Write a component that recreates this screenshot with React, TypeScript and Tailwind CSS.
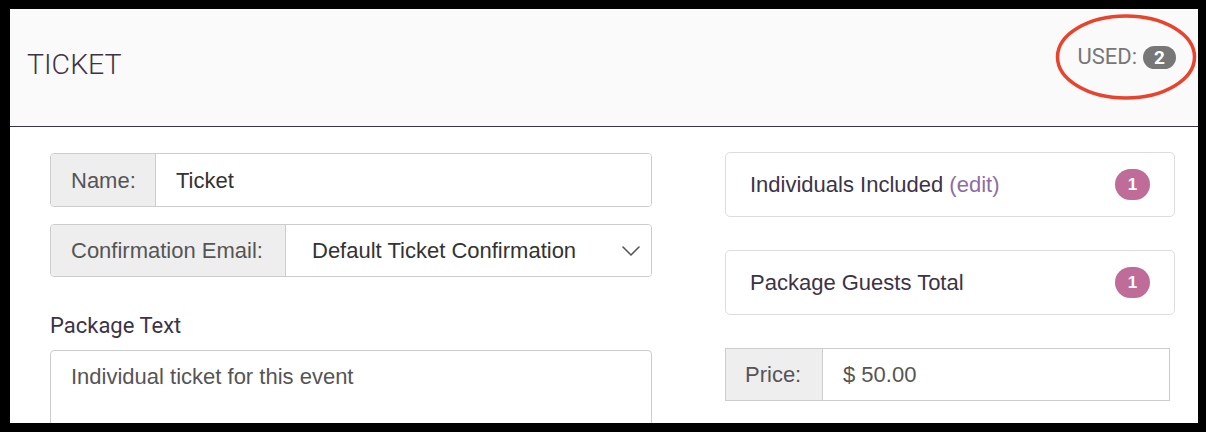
import React from "react";

const roboto = { fontFamily: "Roboto, 'Liberation Sans', sans-serif" };

function Chevron() {
  return (
    <svg width="20" height="12" viewBox="0 0 20 12" fill="none">
      <polyline points="2,2 10,10 18,2" stroke="#555" strokeWidth="1.6" strokeLinecap="round" strokeLinejoin="round" />
    </svg>
  );
}

export default function App() {
  return (
    <div className="relative w-[1206px] h-[432px] bg-black pt-[9px] pl-[10px]">
      <div className="w-[1188px] h-[414px] bg-white overflow-hidden">
        <header className="h-[118px] bg-[#fafafa] border-b border-[#3d3347] flex justify-between">
          <h1
            className="pl-[17px] pt-[38px] text-[28.5px] leading-[36px] font-light text-[#3d3347]"
            style={roboto}
          >
            TICKET
          </h1>
          <div className="flex items-center gap-[6px] pr-[22px] pt-[35px] self-start">
            <span className="text-[22px] leading-[26px] text-[#777]" style={roboto}>
              USED:
            </span>
            <span
              className="h-[23px] w-[33px] rounded-full bg-[#777] text-white text-[19px] font-bold flex items-center justify-center leading-none"
              style={roboto}
            >
              2
            </span>
          </div>
        </header>

        <div
          className="flex pl-[40px] pt-[25px] gap-[73px] text-[22px]"
          style={{ fontFamily: "'Liberation Sans', Arial, sans-serif" }}
        >
          {/* Left column */}
          <div className="w-[602px] flex flex-col">
            <div className="mt-[1px] h-[54px] flex border border-[#ccc] rounded-[4px] overflow-hidden">
              <div className="w-[105px] bg-[#eee] border-r border-[#ccc] flex items-center pl-[20px] text-[#555]">
                Name:
              </div>
              <div className="flex-1 bg-white flex items-center pl-[20px] text-[#333]">Ticket</div>
            </div>
            <div className="mt-[17px] h-[53px] flex border border-[#ccc] rounded-[4px] overflow-hidden">
              <div className="w-[235px] bg-[#eee] border-r border-[#ccc] flex items-center pl-[20px] text-[#555]">
                Confirmation Email:
              </div>
              <div className="flex-1 bg-white flex items-center justify-between pl-[26px] pr-[10px] text-[#333]">
                <span>Default Ticket Confirmation</span>
                <Chevron />
              </div>
            </div>
            <div className="mt-[36px] text-[22px] leading-[26px] text-[#3d3347]" style={roboto}>
              Package Text
            </div>
            <div className="mt-[11px] h-[120px] border border-[#ccc] rounded-[4px] pl-[20px] pt-[13px] text-[#555] leading-[26px]">
              Individual ticket for this event
            </div>
          </div>

          {/* Right column */}
          <div className="w-[450px] flex flex-col">
            <div className="h-[65px] border border-[#ddd] rounded-[5px] flex items-center justify-between pl-[24px] pr-[24px] text-[#3d3347]">
              <span>
                Individuals Included <span className="text-[#8c6ea6]">(edit)</span>
              </span>
              <span className="w-[35px] h-[31px] rounded-full bg-[#c06c98] text-white text-[17px] font-bold flex items-center justify-center leading-none">
                1
              </span>
            </div>
            <div className="mt-[33px] h-[65px] border border-[#ddd] rounded-[5px] flex items-center justify-between pl-[24px] pr-[24px] text-[#3d3347]">
              <span>Package Guests Total</span>
              <span className="w-[35px] h-[31px] rounded-full bg-[#c06c98] text-white text-[17px] font-bold flex items-center justify-center leading-none">
                1
              </span>
            </div>
            <div className="mt-[33px] w-[445px] h-[53px] flex border border-[#ccc]">
              <div className="w-[97px] bg-[#eee] border-r border-[#ccc] flex items-center pl-[19px] text-[#555]">
                Price:
              </div>
              <div className="flex-1 bg-white flex items-center pl-[20px] text-[#555]">$ 50.00</div>
            </div>
          </div>
        </div>
      </div>

      <svg
        className="absolute left-0 top-0 pointer-events-none"
        width="1206"
        height="432"
        viewBox="0 0 1206 432"
      >
        <ellipse cx="1126" cy="57" rx="68.5" ry="41" fill="none" stroke="#e8432d" strokeWidth="3.5" />
      </svg>
    </div>
  );
}
